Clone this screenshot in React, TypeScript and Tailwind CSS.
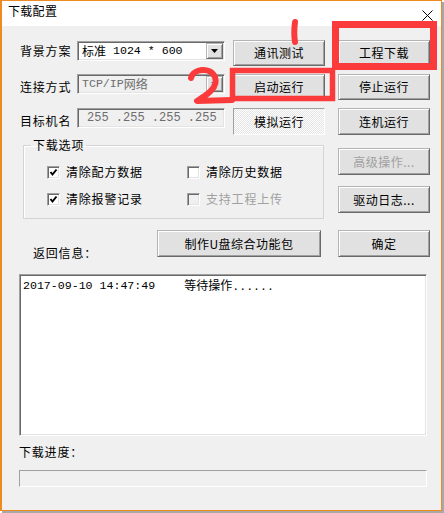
import type { ReactNode } from 'react';

const cjk = 'font-["Noto_Sans_CJK_SC","Noto_Sans",sans-serif]';
const mono = 'font-["Liberation_Mono","Noto_Sans_CJK_SC",monospace]';

const raised =
  'bg-[#e1e1e1] border border-t-[#b4b4b4] border-l-[#b4b4b4] border-r-[#696969] border-b-[#696969] shadow-[inset_1px_1px_0_#ffffff,inset_-1px_-1px_0_#a0a0a0]';
const sunken =
  'border border-t-[#a0a0a0] border-l-[#a0a0a0] border-r-[#ffffff] border-b-[#ffffff] shadow-[inset_1px_1px_0_#696969,inset_-1px_-1px_0_#e3e3e3]';

function Btn({ children, className = 'w-[92px] h-[26px]', disabled }: { children: ReactNode; className?: string; disabled?: boolean }) {
  return (
    <div className={`${raised} ${className} flex items-center justify-center text-[12px] leading-[14px] tracking-[0.5px] ${disabled ? 'text-[#a0a0a0]' : 'text-black'}`}>
      {children}
    </div>
  );
}

function Arrow({ color = '#000' }: { color?: string }) {
  return (
    <svg width="7" height="4" viewBox="0 0 7 4">
      <polygon points="0,0 7,0 3.5,4" fill={color} />
    </svg>
  );
}

function Combo({ children, disabled }: { children: ReactNode; disabled?: boolean }) {
  return (
    <div className={`${sunken} w-[148px] h-[20px] flex items-stretch ${disabled ? 'bg-[#f0f0f0] text-[#6d6d6d]' : 'bg-white text-black'}`}>
      <div className="flex-1 flex items-center pl-[4px] text-[12px] leading-[14px] whitespace-pre">{children}</div>
      <div className={`${raised} w-[17px] m-[1px] flex items-center justify-center`}>
        <Arrow color={disabled ? '#6d6d6d' : '#000'} />
      </div>
    </div>
  );
}

function Check({ checked, disabled, label }: { checked?: boolean; disabled?: boolean; label: string }) {
  return (
    <div className="flex items-center h-[14px]">
      <div className={`${sunken} w-[13px] h-[13px] flex items-center justify-center ${disabled ? 'bg-[#f0f0f0]' : 'bg-white'}`}>
        {checked && (
          <svg width="9" height="9" viewBox="0 0 9 9">
            <polyline points="1.5,4 3.5,6.5 7.5,1.5" fill="none" stroke="#000" strokeWidth="2" />
          </svg>
        )}
      </div>
      <span className={`ml-[6px] text-[12px] leading-[14px] tracking-[0.8px] ${disabled ? 'text-[#a0a0a0]' : 'text-black'}`}>{label}</span>
    </div>
  );
}

export default function App() {
  return (
    <div className={`relative w-[444px] h-[513px] bg-white ${cjk}`}>
      <div className="w-[442px] h-[511px] flex flex-col border border-l-2 border-[#ee8a22] shadow-[2px_2px_0_#a8a8a8] bg-[#f0f0f0]">
        {/* title bar */}
        <div className="h-[25px] bg-white flex items-start justify-between pl-[6px] pr-[8px] pt-[3px]">
          <span className="text-[12px] leading-[14px] tracking-[0.3px]">下载配置</span>
          <svg width="11" height="11" viewBox="0 0 11 11" className="mt-[6px]">
            <path d="M0.5 0.5 L10.5 10.5 M10.5 0.5 L0.5 10.5" stroke="#000" strokeWidth="1" />
          </svg>
        </div>

        <div className="flex flex-col pl-[18px] text-[12px] leading-[14px]">
          {/* rows */}
          <div className="mt-[14px] flex items-start">
            <span className="w-[57px] mt-[4px] tracking-[0.8px]">背景方案</span>
            <div className="mt-[1px]">
              <Combo>
                标准<span className={`${mono} text-[11.6px]`}> 1024 * 600</span>
              </Combo>
            </div>
            <div className="ml-[8px]"><Btn>通讯测试</Btn></div>
            <div className="ml-[13px]"><Btn>工程下载</Btn></div>
          </div>

          <div className="mt-[8px] flex items-start">
            <span className="w-[57px] mt-[6px] tracking-[0.8px]">连接方式</span>
            <Combo disabled>
              <span className={`${mono} text-[11.6px]`}>TCP/IP</span>网络
            </Combo>
            <div className="ml-[8px]"><Btn>启动运行</Btn></div>
            <div className="ml-[13px]"><Btn>停止运行</Btn></div>
          </div>

          <div className="mt-[8px] flex items-start">
            <span className="w-[57px] mt-[6px] tracking-[0.8px]">目标机名</span>
            <div className={`${sunken} w-[148px] h-[20px] bg-[#f0f0f0] text-[#6d6d6d] flex items-center pl-[9px]`}>
              <span className={`${mono} text-[12px] whitespace-pre`}>255 .255 .255 .255</span>
            </div>
            <div className="ml-[8px]">
              <div className="w-[92px] h-[27px] flex items-center justify-center tracking-[0.5px] border border-t-[#a0a0a0] border-l-[#a0a0a0] border-r-[#ffffff] border-b-[#ffffff] bg-[repeating-conic-gradient(#ffffff_0%_25%,#e4e4e4_0%_50%)] bg-[length:2px_2px]">
                模拟运行
              </div>
            </div>
            <div className="ml-[13px]"><Btn className="w-[92px] h-[27px]">连机运行</Btn></div>
          </div>

          {/* options + side buttons */}
          <div className="mt-[3px] flex items-start">
            <fieldset className="ml-[3px] w-[301px] h-[81px] border border-[#d4d4d4] shadow-[inset_1px_1px_0_#ffffff]">
              <legend className="ml-[7px] px-[2px] tracking-[0.8px]">下载选项</legend>
              <div className="mt-[13px] pl-[23px] grid grid-cols-[140px_1fr] gap-y-[13px]">
                <Check checked label="清除配方数据" />
                <Check label="清除历史数据" />
                <Check checked label="清除报警记录" />
                <Check disabled label="支持工程上传" />
              </div>
            </fieldset>
            <div className="ml-[14px] mt-[10px] flex flex-col gap-[11px]">
              <Btn className="w-[92px] h-[27px]" disabled>高级操作...</Btn>
              <Btn className="w-[92px] h-[27px]">驱动日志...</Btn>
            </div>
          </div>

          <div className="mt-[11px] h-[27px] flex items-start">
            <span className="w-[137px] pl-[13px] pt-[16px] tracking-[0.8px]">返回信息：</span>
            <Btn className="w-[164px] h-[27px]">制作U盘综合功能包</Btn>
            <div className="ml-[17px]"><Btn className="w-[92px] h-[27px]">确定</Btn></div>
          </div>

          {/* log */}
          <div className={`${sunken} -ml-[1px] mt-[17px] w-[408px] h-[162px] bg-white pl-[3px] pt-[3px]`}>
            <div className="flex items-center">
              <span className={`${mono} text-[11.6px] leading-[14px]`}>2017-09-10 14:47:49</span>
              <span className="ml-[29px] leading-[14px]">等待操作<span className={`${mono} text-[11.6px]`}>......</span></span>
            </div>
          </div>

          <span className="-ml-[1px] mt-[9px] tracking-[0.8px]">下载进度：</span>
          <div className="-ml-[1px] mt-[11px] w-[408px] h-[17px] border border-t-[#a0a0a0] border-l-[#a0a0a0] border-r-[#ffffff] border-b-[#ffffff]" />
        </div>
      </div>

      {/* hand-drawn red annotations */}
      <svg className="absolute left-0 top-0 pointer-events-none" width="444" height="513" viewBox="0 0 444 513">
        <g fill="none" stroke="#fb3b3b" strokeLinecap="round" strokeLinejoin="round">
          <rect x="335.5" y="24.5" width="98" height="42" strokeWidth="7" strokeLinecap="butt" strokeLinejoin="miter" />
          <rect x="232.5" y="70.5" width="100" height="28" strokeWidth="5.5" strokeLinecap="butt" strokeLinejoin="miter" />
          <path d="M295 22 C294 30 294 36 295 42" strokeWidth="6" />
          <path d="M191 78 C193 69 210 66 215 77 C219 88 205 96 197 101 L232 100" strokeWidth="6" />
        </g>
      </svg>
    </div>
  );
}
